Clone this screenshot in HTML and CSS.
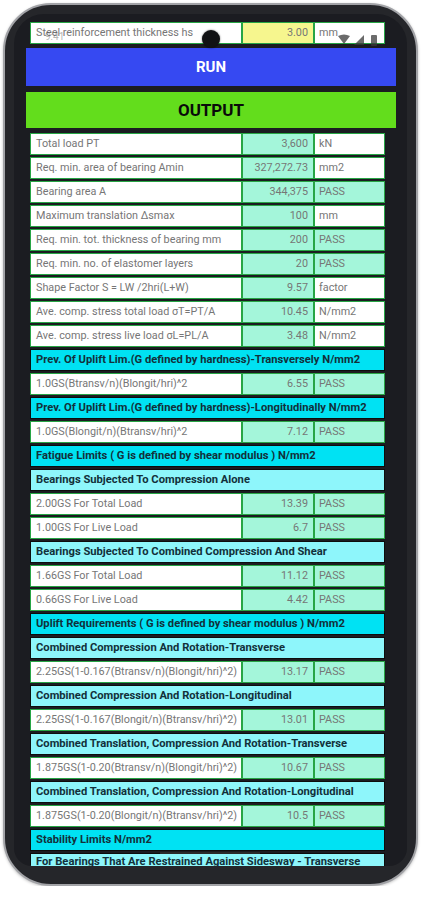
FILE: index.html
```html
<!DOCTYPE html>
<html lang="en">
<head>
  <meta charset="UTF-8">
  <meta name="viewport" content="width=device-width, initial-scale=1.0">
  <title>Elastomeric Bearing Design - Output</title>
  <link rel="stylesheet" href="styles.css">
</head>
<body>
  <div class="phone">
    <div class="screen">
      <!-- status bar sits over the scrolled sheet -->
      <span class="clock">9:41</span>
      <span class="camera"></span>
      <svg class="status-icons" width="42" height="12" viewBox="0 0 42 12">
        <path d="M0 2 Q6 -1 12 2 L6 10 Z" fill="#3a3a3a"/>
        <path d="M16 11 L26 1 L26 11 Z" fill="#3a3a3a"/>
        <rect x="33" y="1" width="6" height="11" rx="1" fill="#3a3a3a"/>
      </svg>

      <div class="row input-row">
        <div class="cell label">Steel reinforcement thickness hs</div>
        <div class="cell value input">3.00</div>
        <div class="cell unit">mm</div>
      </div>

      <button class="run">RUN</button>
      <div class="output">OUTPUT</div>

      <div class="sheet">
        <div class="row"><div class="cell label">Total load PT</div><div class="cell value">3,600</div><div class="cell unit">kN</div></div>
        <div class="row"><div class="cell label">Req. min. area of bearing Amin</div><div class="cell value">327,272.73</div><div class="cell unit">mm2</div></div>
        <div class="row"><div class="cell label">Bearing area A</div><div class="cell value">344,375</div><div class="cell unit pass">PASS</div></div>
        <div class="row"><div class="cell label">Maximum translation Δsmax</div><div class="cell value">100</div><div class="cell unit">mm</div></div>
        <div class="row"><div class="cell label">Req. min. tot. thickness of bearing mm</div><div class="cell value">200</div><div class="cell unit pass">PASS</div></div>
        <div class="row"><div class="cell label">Req. min. no. of elastomer layers</div><div class="cell value">20</div><div class="cell unit pass">PASS</div></div>
        <div class="row"><div class="cell label">Shape Factor S = LW /2hri(L+W)</div><div class="cell value">9.57</div><div class="cell unit">factor</div></div>
        <div class="row"><div class="cell label">Ave. comp. stress total load σT=PT/A</div><div class="cell value">10.45</div><div class="cell unit">N/mm2</div></div>
        <div class="row"><div class="cell label">Ave. comp. stress live load σL=PL/A</div><div class="cell value">3.48</div><div class="cell unit">N/mm2</div></div>

        <div class="heading main">Prev. Of Uplift Lim.(G defined by hardness)-Transversely N/mm2</div>
        <div class="row"><div class="cell label">1.0GS(Btransv/n)(Blongit/hri)^2</div><div class="cell value">6.55</div><div class="cell unit pass">PASS</div></div>
        <div class="heading main">Prev. Of Uplift Lim.(G defined by hardness)-Longitudinally N/mm2</div>
        <div class="row"><div class="cell label">1.0GS(Blongit/n)(Btransv/hri)^2</div><div class="cell value">7.12</div><div class="cell unit pass">PASS</div></div>

        <div class="heading main">Fatigue Limits ( G is defined by shear modulus ) N/mm2</div>
        <div class="heading sub">Bearings Subjected To Compression Alone</div>
        <div class="row"><div class="cell label">2.00GS For Total Load</div><div class="cell value">13.39</div><div class="cell unit pass">PASS</div></div>
        <div class="row"><div class="cell label">1.00GS For Live Load</div><div class="cell value">6.7</div><div class="cell unit pass">PASS</div></div>
        <div class="heading sub">Bearings Subjected To Combined Compression And Shear</div>
        <div class="row"><div class="cell label">1.66GS For Total Load</div><div class="cell value">11.12</div><div class="cell unit pass">PASS</div></div>
        <div class="row"><div class="cell label">0.66GS For Live Load</div><div class="cell value">4.42</div><div class="cell unit pass">PASS</div></div>

        <div class="heading main">Uplift Requirements ( G is defined by shear modulus ) N/mm2</div>
        <div class="heading sub">Combined Compression And Rotation-Transverse</div>
        <div class="row"><div class="cell label">2.25GS(1-0.167(Btransv/n)(Blongit/hri)^2)</div><div class="cell value">13.17</div><div class="cell unit pass">PASS</div></div>
        <div class="heading sub">Combined Compression And Rotation-Longitudinal</div>
        <div class="row"><div class="cell label">2.25GS(1-0.167(Blongit/n)(Btransv/hri)^2)</div><div class="cell value">13.01</div><div class="cell unit pass">PASS</div></div>
        <div class="heading sub">Combined Translation, Compression And Rotation-Transverse</div>
        <div class="row"><div class="cell label">1.875GS(1-0.20(Btransv/n)(Blongit/hri)^2)</div><div class="cell value">10.67</div><div class="cell unit pass">PASS</div></div>
        <div class="heading sub">Combined Translation, Compression And Rotation-Longitudinal</div>
        <div class="row"><div class="cell label">1.875GS(1-0.20(Blongit/n)(Btransv/hri)^2)</div><div class="cell value">10.5</div><div class="cell unit pass">PASS</div></div>

        <div class="heading main">Stability Limits N/mm2</div>
        <div class="heading sub last">For Bearings That Are Restrained Against Sidesway - Transverse</div>
      </div>

      <span class="nav-pill"></span>
    </div>
  </div>
</body>
</html>
```

FILE: styles.css
```css
body {
  margin: 0;
  background-color: #ffffff;
  font-family: Roboto, "Liberation Sans", sans-serif;
}
.phone {
  box-sizing: border-box;
  width: 415px;
  height: 883px;
  margin: 3px 0 0 3px;
  padding: 9px 9px 18px 9px;
  border: 2px solid #a2a3a7;
  border-radius: 48px;
  background-color: #25262a;
  box-shadow: 0 1px 3px rgba(0, 0, 0, 0.25);
}
.screen {
  position: relative;
  height: 100%;
  overflow: hidden;
  padding: 8px 11px 0 12px;
  box-sizing: border-box;
  border-radius: 30px 30px 18px 18px;
  background-color: #1b1c21;
}

/* status bar overlay */
.clock {
  position: absolute;
  top: 17px;
  left: 31px;
  font-size: 10px;
  color: rgba(60, 60, 60, 0.4);
}
.camera {
  position: absolute;
  top: 16px;
  left: 188px;
  width: 18px;
  height: 18px;
  border-radius: 50%;
  background-color: #111214;
  box-shadow: 0 0 2px rgba(0, 0, 0, 0.6);
}
.status-icons {
  position: absolute;
  top: 20px;
  left: 324px;
  opacity: 0.75;
}
.nav-pill {
  position: absolute;
  top: 838px;
  left: 146px;
  width: 100px;
  height: 2px;
  background-color: #2a2a2a;
}

/* sheet rows */
.row {
  display: grid;
  grid-template-columns: 212px 72px 71px;
  width: 355px;
  height: 22px;
  margin: 0 0 2px 4px;
}
.cell {
  box-sizing: border-box;
  border: 1px solid #27a545;
  font-size: 10.8px;
  line-height: 20px;
  color: #767676;
  white-space: nowrap;
  overflow: hidden;
}
.label {
  padding-left: 5px;
  background-color: #ffffff;
}
.value {
  text-align: right;
  padding-right: 5px;
  background-color: #a4f6da;
}
.unit {
  padding-left: 4px;
  background-color: #ffffff;
}
.unit.pass {
  background-color: #a4f6da;
}
.input-row {
  margin-bottom: 4px;
}
.value.input {
  background-color: #f6f68e;
}

.run,
.output {
  display: block;
  width: 100%;
  border: none;
  font-family: inherit;
  font-weight: 700;
  text-align: center;
}
.run {
  height: 38px;
  margin-bottom: 6px;
  background-color: #3649f2;
  color: #ffffff;
  font-size: 15px;
}
.output {
  height: 36px;
  line-height: 37px;
  margin-bottom: 5px;
  background-color: #63dd1c;
  color: #0a0a0a;
  font-size: 17px;
}

.heading {
  box-sizing: border-box;
  width: 355px;
  height: 22px;
  margin: 0 0 2px 4px;
  padding-left: 5px;
  border: 1px solid #0d0d0d;
  font-size: 11.2px;
  font-weight: 700;
  line-height: 20px;
  color: #12303a;
  white-space: nowrap;
  overflow: hidden;
}
.heading.main {
  background-color: #00e2f3;
}
.heading.sub {
  background-color: #8ef6fb;
}
.heading.last {
  line-height: 16px;
}
```
